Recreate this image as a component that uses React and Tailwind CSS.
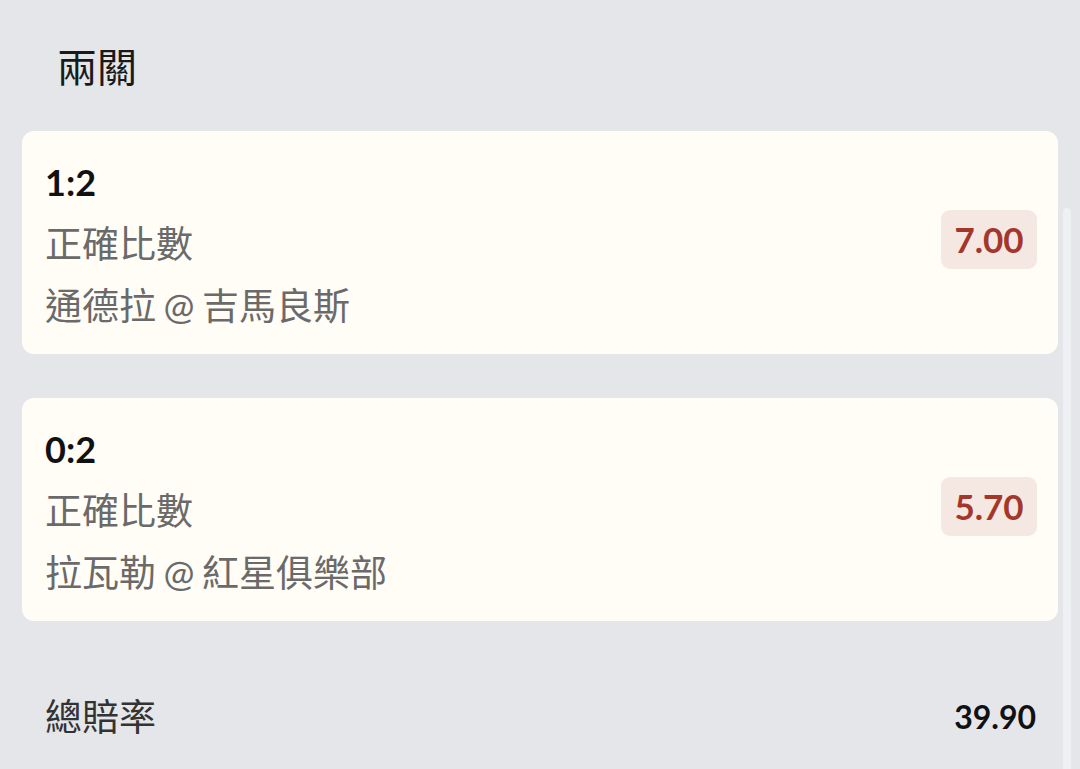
import React from 'react';

const legs = [
  { score: '1:2', market: '正確比數', match: '通德拉 @ 吉馬良斯', odds: '7.00' },
  { score: '0:2', market: '正確比數', match: '拉瓦勒 @ 紅星俱樂部', odds: '5.70' },
];

function LegCard({ leg }) {
  return (
    <div className="mx-[22px] flex items-center justify-between rounded-[12px] bg-[#fffdf6] pl-[23px] pr-[21px] pt-[20px] pb-[17px]">
      <div className="flex flex-col">
        <div className="flex h-[62px] items-center text-[36px] font-bold text-[#111111]">{leg.score}</div>
        <div className="flex h-[62px] items-center text-[37px] text-[#6a6a6a]">{leg.market}</div>
        <div className="flex h-[62px] items-center text-[37px] text-[#6a6a6a] [word-spacing:-2px]">{leg.match}</div>
      </div>
      <div className="mb-[9px] flex h-[59px] w-[96px] items-center justify-center rounded-[9px] bg-[#f5e7e1] text-[35px] font-bold text-[#a3372b]">
        {leg.odds}
      </div>
    </div>
  );
}

export default function App() {
  return (
    <div className="relative h-[769px] w-[1080px] overflow-hidden bg-[#e5e6e9] font-['Lato','Noto_Sans_CJK_TC',sans-serif]">
      <div className="h-[131px] px-[57px] pt-[42px]">
        <h1 className="text-[40px] leading-[46px] text-[#1a1a1a] font-['Noto_Sans_CJK_TC',sans-serif]">兩關</h1>
      </div>

      <div className="flex flex-col gap-[44px]">
        {legs.map((leg) => (
          <LegCard key={leg.score} leg={leg} />
        ))}
      </div>

      <div className="mt-[65px] flex h-[62px] items-center justify-between pl-[45px] pr-[44px]">
        <span className="text-[37px] text-[#333333]">總賠率</span>
        <span className="text-[32px] font-bold text-[#111111]">39.90</span>
      </div>

      <div className="absolute right-[9px] top-[208px] bottom-0 w-[8px] rounded-t-[4px] bg-[#eef0f3]" />
    </div>
  );
}
